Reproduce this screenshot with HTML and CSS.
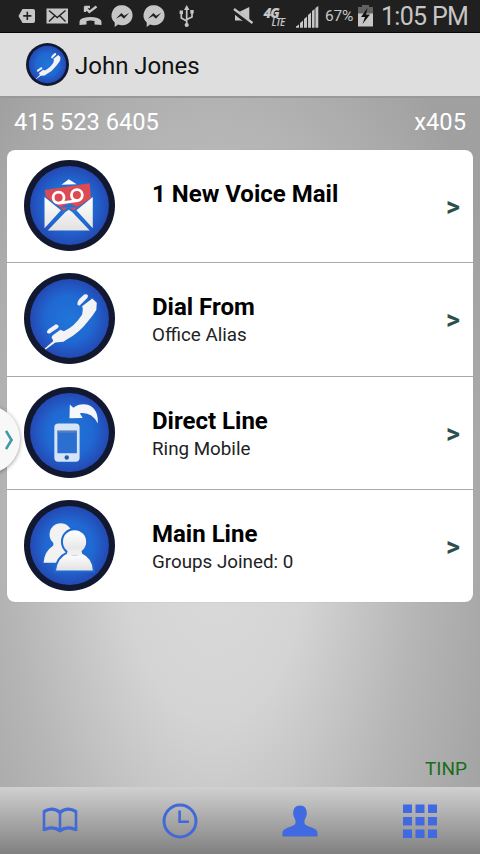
FILE: index.html
```html
<!DOCTYPE html>
<html lang="en">
<head>
	<meta charset="UTF-8">
	<title>John Jones</title>
	<link rel="stylesheet" href="styles.css">
</head>
<body>
<!-- shared gradients and the handset -->
<svg class="defs" width="0" height="0">
	<defs>
		<radialGradient id="blue">
			<stop offset="0" stop-color="#2076d8"/>
			<stop offset=".6" stop-color="#2068d2"/>
			<stop offset="1" stop-color="#2449b4"/>
		</radialGradient>
		<linearGradient id="paper" x1="0" y1="0" x2="0" y2="1">
			<stop offset="0" stop-color="#fff"/>
			<stop offset="1" stop-color="#e2e2e2"/>
		</linearGradient>
		<symbol id="disc" viewBox="0 0 90 90">
			<circle cx="45" cy="45" r="45" fill="#11182f"/>
			<circle cx="45" cy="45" r="39" fill="url(#blue)"/>
		</symbol>
		<symbol id="handset" viewBox="0 0 90 90">
			<path fill="#f3f3f5" d="M20.5 74.6L29 67.2L27.2 63.5L28.5 61.5L36 56.2L39.5 57.6Q50 53 57.5 41L58.2 35.5L57.5 33L67.5 25.2L72 29.5L71.5 36.5Q68 42 63.5 47.5Q55 59 42.7 65.5L39 68L31 68.8L21.3 75.6Z"/>
			<path fill="#f3f3f5" d="M52.8 31.5Q52.5 28.5 54.5 26L59.5 21.3Q62.5 20.5 63.3 22.5L62.8 24.5L54.8 32.5ZM22.6 59Q22.6 57 24.5 55.5L31.5 50.8Q34.3 51 34.4 53L33.5 54.5L25 60.2Z"/>
		</symbol>
	</defs>
</svg>

<div class="status">
	<svg class="status-left" width="180" height="32" viewBox="17 0 180 32" fill="#c6c6c6">
		<path d="M22.5 9H33Q35 9 35 11V21Q35 23 33 23H22.5L18.5 16Z"/>
		<path d="M27.3 11.8V20M23.2 15.9H31.4" stroke="#222" stroke-width="1.6"/>
		<path d="M46.5 8.5H68V23.5H46.5Z"/>
		<path d="M49 10.5L57.2 17.5L65.5 10.5M49 21.5L54.5 16M65.5 21.5L60 16" stroke="#222" stroke-width="1.4" fill="none"/>
		<path d="M79.5 23Q79 19 83.5 18Q90.5 15.8 97.5 18Q102 19.5 101.5 23V25L94.5 24.5V21Q90.5 19.8 86.5 21V24.5L79.5 25Z"/>
		<path d="M85 6.5V12M84.5 7H90M85.5 7.5L89.3 12L96.5 6.5" stroke="#c6c6c6" stroke-width="2.3" fill="none"/>
		<g id="msg">
			<path d="M122.6 5.3A10.5 10 0 1 1 118 24.5L114.7 27V22.5A10.2 10 0 0 1 122.6 5.3Z"/>
			<path d="M116 18.8L121.3 13L124.2 15.7L129.2 12.8L124 18.8L121 16Z" fill="#222"/>
		</g>
		<use href="#msg" x="32"/>
		<path d="M186.7 9V24M186.7 21L181.3 18V13M186.7 19.5L192 17V12" stroke="#c6c6c6" stroke-width="1.7" fill="none"/>
		<path d="M186.7 5L189.5 10H184ZM179.6 10.5H183V14H179.6ZM190.3 10H193.7V13.5H190.3Z"/>
		<circle cx="186.7" cy="25" r="2.1"/>
	</svg>
	<div class="status-right">
		<svg width="86" height="32" viewBox="233 0 86 32" fill="#c6c6c6">
			<path d="M235 11.5H240L249.3 7V22L240 20.5H235Z"/>
			<path d="M233 10L252 25" stroke="#202020" stroke-width="5"/>
			<path d="M234 9L252.5 23" stroke="#c6c6c6" stroke-width="2.2"/>
			<text class="net" x="263.5" y="17.6" font-size="13.5">4G</text>
			<text class="net lte" x="271.5" y="26.4" font-size="10">LTE</text>
			<path d="M296 27.8V26.4L299 24.5V27.8ZM300 27.8V23L303 20.5V27.8ZM304 27.8V19L307 16.5V27.8ZM308 27.8V15L311 12.5V27.8ZM312 27.8V11L314.6 9V27.8ZM315.4 27.8V8L318.3 6V27.8Z"/>
		</svg>
		<span class="percent">67%</span>
		<svg class="battery" width="15" height="32" viewBox="358 0 15 32">
			<path d="M358 7H362V5H369V7H373V16H358Z" fill="#626262"/>
			<path d="M358 13.5H373V26.5H358Z" fill="#c6c6c6"/>
			<path d="M367.5 8L361 17H365L362.5 24L370 14.5H366Z" fill="#111"/>
		</svg>
		<span class="clock">1:05 PM</span>
	</div>
</div>

<div class="header">
	<svg class="logo" viewBox="0 0 90 90">
		<use href="#disc"/>
		<use href="#handset"/>
	</svg>
	<span class="name">John Jones</span>
</div>

<div class="main">
	<div class="numbers">
		<span>415 523 6405</span>
		<span>x405</span>
	</div>
	<div class="list">
		<div class="row">
			<svg class="icon" viewBox="0 0 90 90">
				<use href="#disc"/>
				<path fill="#fff" d="M37 24.5L44.3 19L52 24Z"/>
				<path fill="#dc4a52" d="M20.5 29.7L65 23L66.3 37.5L53 46.5L44.5 42.5L36 47L21.7 36.5Z"/>
				<path fill="#dc4a52" d="M36 47H53L49 50L44.3 46.5L39 50Z"/>
				<g fill="none" stroke="#fff" stroke-width="2.8">
					<circle cx="34.2" cy="37.2" r="5.4"/>
					<circle cx="52.3" cy="34.7" r="5.4"/>
					<path d="M35 42.6L53 40.1"/>
				</g>
				<path fill="url(#paper)" d="M20.3 36.5L36.5 49.7L20.3 67.5ZM68 36.5L51.8 49.7L68 67.5ZM23.5 69.8L41 51.5L44.3 49.2L47.6 51.5L65 69.8Z"/>
			</svg>
			<div class="info">
				<div class="title">1 New Voice Mail</div>
				<div class="sub">&nbsp;</div>
			</div>
			<div class="more">&gt;</div>
		</div>
		<div class="row">
			<svg class="icon" viewBox="0 0 90 90">
				<use href="#disc"/>
				<use href="#handset"/>
			</svg>
			<div class="info">
				<div class="title">Dial From</div>
				<div class="sub">Office Alias</div>
			</div>
			<div class="more">&gt;</div>
		</div>
		<div class="row">
			<svg class="icon" viewBox="0 0 90 90">
				<use href="#disc"/>
				<rect x="30" y="36" width="25" height="38" rx="4" fill="#d5e4f7"/>
				<path d="M33 43.2H52.3V65.5H33Z" fill="#2b6fd0"/>
				<path d="M33 43.2H52.3V45.2H33Z" fill="#5580b8"/>
				<circle cx="42.3" cy="69.7" r="2.2" fill="#245aa8"/>
				<path fill="#f5f7fb" d="M45.3 17.3L48.8 20.5Q55 16 63 17.6Q73.5 21 73 36Q67 24.5 55.2 26L58 30.7L45 30.8Z"/>
			</svg>
			<div class="info">
				<div class="title">Direct Line</div>
				<div class="sub">Ring Mobile</div>
			</div>
			<div class="more">&gt;</div>
		</div>
		<div class="row">
			<svg class="icon" viewBox="0 0 90 90">
				<use href="#disc"/>
				<circle cx="36.3" cy="34" r="11" fill="#f2f2f2"/>
				<path fill="#f2f2f2" d="M19.3 62Q20 51 29 45L29 41L44 43V62Z"/>
				<g fill="url(#paper)" stroke="#2068d2" stroke-width="4" paint-order="stroke">
					<path d="M31.7 69.7Q33 57.5 43 53H57Q67.5 57.5 68 69.7Z"/>
					<circle cx="50" cy="41.3" r="11.5"/>
				</g>
				<path fill="#f0f0f0" d="M43.5 49H56.5L58 55H42Z"/>
			</svg>
			<div class="info">
				<div class="title">Main Line</div>
				<div class="sub">Groups Joined: 0</div>
			</div>
			<div class="more">&gt;</div>
		</div>
	</div>
	<div class="tag">TINP</div>
</div>

<div class="tabs">
	<svg width="36" height="36" viewBox="0 0 36 36" fill="none" stroke="#4169d8">
		<path d="M2 7.5V28M34 7.5V28M18 8V28.5" stroke-width="2.6"/>
		<path d="M2 8.5Q11 3.5 18 9.5Q25 3.5 34 8.5M2 26.8Q11 22.5 18 27.8Q25 22.5 34 26.8" stroke-width="3.2"/>
	</svg>
	<svg width="36" height="36" viewBox="0 0 36 36" fill="none" stroke="#4169d8">
		<circle cx="18" cy="18" r="16" stroke-width="3"/>
		<path d="M17.6 7.5V18.7H27" stroke-width="2.6"/>
	</svg>
	<svg width="36" height="36" viewBox="0 0 36 36" fill="#4169e1">
		<path d="M18 2.5C22.5 2.5 24.8 5.5 24.8 10C24.8 14 22.7 15.5 22.4 18.5C22.4 22 24 22.4 27 23.5C33 25.5 35.5 27 35.5 30V33.5H.5V30C.5 27 3 25.5 9 23.5C12 22.4 13.6 22 13.6 18.5C13.3 15.5 11.2 14 11.2 10C11.2 5.5 13.5 2.5 18 2.5Z"/>
	</svg>
	<svg width="36" height="36" viewBox="0 0 36 36" fill="#4169e1">
		<path d="M1 1.5h9v8.5h-9zM13.5 1.5h9v8.5h-9zM26 1.5h9v8.5h-9zM1 14h9v8.5h-9zM13.5 14h9v8.5h-9zM26 14h9v8.5h-9zM1 26.5h9v8.5h-9zM13.5 26.5h9v8.5h-9zM26 26.5h9v8.5h-9z"/>
	</svg>
</div>

<!-- side drawer handle, floats over the list -->
<div class="handle">
	<svg width="9" height="20" viewBox="0 0 9 20" fill="none" stroke="#4297a8" stroke-width="2.6">
		<path d="M1 1L6.5 10L1 19"/>
	</svg>
</div>
</body>
</html>
```

FILE: styles.css
```css
* {
	box-sizing: border-box;
}
body {
	margin: 0;
	width: 480px;
	height: 854px;
	overflow: hidden;
	position: relative;
	display: flex;
	flex-direction: column;
	font-family: Roboto, sans-serif;
	color: #000;
}
.defs {
	position: absolute;
}

/* status bar */
.status {
	height: 33px;
	flex: none;
	display: flex;
	justify-content: space-between;
	padding: 0 11px 0 17px;
	background: #202020;
	border-bottom: 1px solid #060606;
	color: #c6c6c6;
}
.status-right {
	display: flex;
	line-height: 32px;
	white-space: nowrap;
}
.net {
	font-family: "Open Sans", sans-serif;
	font-weight: 800;
	font-style: italic;
	letter-spacing: -1px;
}
.lte {
	font-weight: 600;
	letter-spacing: -0.8px;
}
.percent {
	width: 33px;
	padding-left: 6px;
	font-size: 15.5px;
	letter-spacing: -0.2px;
}
.battery {
	margin-left: 6px;
}
.clock {
	width: 96px;
	padding-left: 8px;
	font-size: 25px;
	letter-spacing: -0.7px;
	line-height: 33px;
}

/* title bar */
.header {
	height: 65px;
	flex: none;
	display: flex;
	align-items: center;
	padding-left: 26px;
	background: #dedede;
	border-bottom: 2px solid #999;
	font-size: 24px;
	color: #111;
}
.logo {
	width: 43px;
	height: 43px;
	margin-right: 6px;
}
.name {
	padding-top: 3px;
}

.main {
	flex: 1;
	padding: 0 7px;
	background: radial-gradient(ellipse 310px 610px at 215px 440px, #dadada 0%, #d4d4d4 30%, #b6b6b6 65%, #a0a0a0 100%);
	display: flex;
	flex-direction: column;
}
.numbers {
	height: 52px;
	display: flex;
	justify-content: space-between;
	padding: 0 7px;
	line-height: 48px;
	font-size: 23.7px;
	color: #fff;
}
.list {
	background: #fff;
	border-radius: 8px;
	box-shadow: 0 0 1px #999;
}
.row {
	height: 113.4px;
	display: flex;
	padding: 10px 13px 0 17px;
	border-bottom: 1px solid #aaa;
}
.row:last-child {
	height: 112px;
	border-bottom: 0;
}
.icon {
	width: 91px;
	height: 91px;
}
.info {
	flex: 1;
	padding: 20px 0 0 37px;
}
.title {
	font-size: 24px;
	line-height: 28px;
	font-weight: bold;
}
.sub {
	font-size: 18.8px;
	line-height: 29px;
	color: #222;
}
.more {
	padding-top: 31px;
	font-size: 27px;
	line-height: 32px;
	font-weight: bold;
	color: #2f4f4f;
}
.tag {
	margin-top: auto;
	padding: 0 6px 7px 0;
	text-align: right;
	font-size: 19px;
	line-height: 22px;
	color: #1a6b1a;
}

.tabs {
	height: 67px;
	flex: none;
	display: grid;
	grid-template-columns: repeat(4, 1fr);
	place-items: center;
	background: linear-gradient(#d0d0d0, #808080);
}

.handle {
	position: absolute;
	left: -49px;
	top: 405px;
	width: 69px;
	height: 69px;
	border-radius: 50%;
	background: #f8f8f8;
	box-shadow: 0 1px 4px rgba(0,0,0,0.4);
	display: flex;
	align-items: center;
	justify-content: flex-end;
	padding-right: 6px;
}
```
